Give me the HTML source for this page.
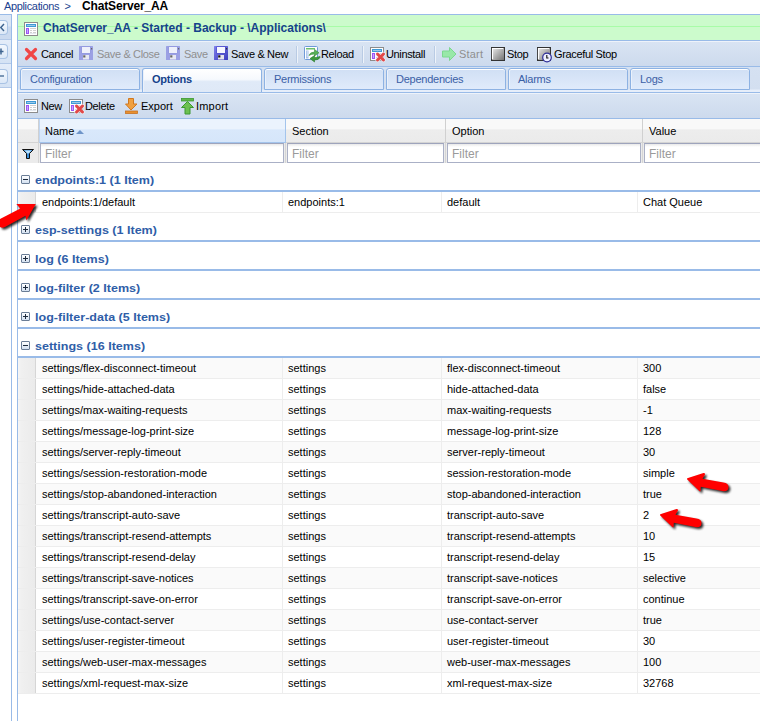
<!DOCTYPE html>
<html><head><meta charset="utf-8"><style>
*{box-sizing:border-box}
html,body{margin:0;padding:0}
body{width:760px;height:721px;overflow:hidden;position:relative;background:#fff;font-family:"Liberation Sans",sans-serif;font-size:11px;color:#000}
.a{position:absolute}
.t{position:absolute;white-space:nowrap;line-height:1}
svg{position:absolute;display:block;overflow:visible}
#crumb1{left:4px;top:1px;font-size:11px;color:#1c3f8f;letter-spacing:-0.35px}
#crumb2{left:82px;top:0px;font-size:12px;font-weight:bold;color:#000;letter-spacing:-0.15px}
#lstrip{left:0;top:14px;width:12px;height:707px;border-right:1px solid #99bbe8;border-top:1px solid #99bbe8;background:#fff}
#lstripTop{left:0;top:15px;width:11px;height:73px;background:linear-gradient(#dce7f5 0,#dae5f4 11px,#c9d9ef 12px,#cbdaef 24px,#e4edf9 25px,#d4e2f4 48px,#e4edf9 49px,#d4e2f4 72px)}
.lbtn{position:absolute;left:0;width:8px;height:15px;border:1px solid #a9c3e4;border-left:none;border-radius:0 4px 4px 0;background:linear-gradient(#f3f8fe,#dce8f7)}
.lsep{position:absolute;left:0;width:11px;height:1px;background:#b3c9e8}
#main{left:17px;top:14px;width:743px;height:707px;border-left:1px solid #99bbe8;border-top:1px solid #99bbe8}
#title{left:18px;top:15px;width:742px;height:26px;background:#ccfbcc;border-bottom:1px solid #99bbe8}
#titleLine{left:18px;top:26px;width:742px;height:1px;background:#a8fca8}
#titleTxt{left:43px;top:22px;font-size:12px;font-weight:bold;color:#15428b;letter-spacing:0}
#tb1{left:18px;top:41px;width:742px;height:26px;background:linear-gradient(#eef3fa 0,#eef3fa 1px,#d9e4f3 1px,#cddaed);border-bottom:1px solid #99bbe8}
.tbt{position:absolute;white-space:nowrap;line-height:1;font-size:11px;top:49px;color:#000;letter-spacing:-0.35px}
.dis{color:#8f8f8f}
.tsep{position:absolute;top:46px;width:1px;height:17px;background:#b9cbe4;box-shadow:1px 0 0 #eef3fa}
#tabs{left:18px;top:67px;width:742px;height:26px;background:linear-gradient(#d5e1f2 0,#d3dff0 22px,#e6eefa 23px);border-bottom:1px solid #99bbe8}
.tab{position:absolute;top:68px;width:120px;height:22px;border:1px solid #8db2e3;border-radius:3px 3px 0 0;background:linear-gradient(#d0dff4,#e0ebfb);box-shadow:inset 0 1px 0 #fff,inset 1px 0 0 #eaf1fb}
.tab.act{height:24px;border-bottom:none;background:linear-gradient(#fff 0,#f6f9fd 45%,#e0eaf8 55%,#dfe9f7)}
.tabtxt{position:absolute;top:74px;font-size:11px;color:#3a60a6;white-space:nowrap;line-height:1;letter-spacing:-0.25px}
.tabtxt.act{font-weight:bold;color:#15428b}
#tb2{left:18px;top:93px;width:742px;height:26px;background:linear-gradient(#eef3fa 0,#eef3fa 1px,#d9e4f3 1px,#cddaed);border-bottom:1px solid #99bbe8}
.tb2t{position:absolute;white-space:nowrap;line-height:1;font-size:11px;top:101px;color:#000;letter-spacing:-0.35px}
#hdr{left:18px;top:119px;width:742px;height:24px;background:linear-gradient(#f9f9f9 0,#f9f9f9 45%,#ededed 46%,#ebebeb);border-bottom:1px solid #d4d4d4}
#hdrSort{left:39px;top:119px;width:247px;height:24px;background:linear-gradient(#ebf3fd 0,#ebf3fd 45%,#d9e8fb 46%,#d6e6fa);border-left:1px solid #c0d6f2;border-right:1px solid #a3c4ec;border-bottom:1px solid #a3c4ec}
.hsep{position:absolute;top:119px;width:1px;height:23px;background:#d0d0d0}
.ht{position:absolute;white-space:nowrap;line-height:1;font-size:11px;top:126px;color:#000}
#filt{left:18px;top:143px;width:742px;height:20px;background:#ebebeb}
.fin{position:absolute;top:143px;height:20px;background:linear-gradient(#e9e9e9,#fff 3px,#fff);border:1px solid #aab0c6;border-top-color:#9ea4bc}
.ft{position:absolute;white-space:nowrap;line-height:1;font-size:12px;top:148px;color:#9a9a9a}
.fsep{position:absolute;top:143px;width:1px;height:20px;background:#d5d5d5}
.grp{position:absolute;left:18px;width:742px;height:29px;background:#fff;border-bottom:2px solid #99bbe8}
.gbox{position:absolute;left:21px;width:9px;height:9px;border:1px solid #6a7d96;border-radius:1px;background:linear-gradient(#fff,#d4e1f1)}
.gh{position:absolute;left:1px;top:3px;width:5px;height:1px;background:#1d2a3c}
.gv{position:absolute;left:3px;top:1px;width:1px;height:5px;background:#1d2a3c}
.gt{position:absolute;left:35px;white-space:nowrap;line-height:1;font-size:11px;font-weight:bold;color:#2f5ea8;transform:scaleX(1.14);transform-origin:0 0}
.row{position:absolute;left:18px;width:742px;height:21px;background:#fff;border-bottom:1px solid #ededed}
.row.alt{background:#fafafa}
.rn{position:absolute;left:18px;width:18px;height:20px;background:linear-gradient(90deg,#f6f6f6,#f0f0f0 3px,#ebebeb);border-right:1px solid #d6d6d6}
.csep{position:absolute;width:1px;height:20px;background:#ededed}
.ct{position:absolute;white-space:nowrap;line-height:1;font-size:11px;color:#000}

</style></head><body>
<div class="t" id="crumb1">Applications&nbsp; &gt;</div>
<div class="t" id="crumb2">ChatServer_AA</div>
<div class="a" id="lstrip"></div>
<div class="a" id="lstripTop"></div>
<div class="lbtn" style="top:20px"></div>
<div class="lsep" style="top:39px"></div>
<div class="lbtn" style="top:44px"></div>
<div class="lsep" style="top:63px"></div>
<div class="lbtn" style="top:69px"></div>
<div class="lsep" style="top:87px"></div>
<svg style="left:0;top:20px" width="8" height="15"><path d="M4 4 L0.8 7.5 L4 11" stroke="#3f6590" stroke-width="1.4" fill="none"/></svg>
<svg style="left:0;top:44px" width="8" height="15"><path d="M0 7.5 H3.5 M1 4.5 V10.5" stroke="#3f6590" stroke-width="1.5" fill="none"/></svg>
<svg style="left:0;top:69px" width="8" height="15"><path d="M0 7 H4" stroke="#3f6590" stroke-width="1.3" fill="none"/></svg>

<div class="a" id="main"></div>
<div class="a" id="title"></div>
<div class="a" id="titleLine"></div>
<svg style="left:24px;top:22px" width="14" height="14"><rect x="0.5" y="0.5" width="13" height="13" fill="#fff" stroke="#8c8c8c"/><rect x="2" y="2" width="10" height="3" fill="#3d9ad6"/><rect x="3" y="3" width="8" height="1" fill="#9cc8e8"/><rect x="2" y="6" width="3" height="6" fill="#9b55f5"/><rect x="3" y="7" width="1" height="4" fill="#c9a8fb"/><rect x="6" y="6" width="6" height="1" fill="#d0d0d0"/><rect x="6" y="8" width="2" height="1" fill="#d0d0d0"/><rect x="9" y="8" width="3" height="1" fill="#d0d0d0"/><rect x="6" y="10" width="2" height="1" fill="#d0d0d0"/><rect x="9" y="10" width="3" height="1" fill="#d0d0d0"/><rect x="6" y="11" width="6" height="1" fill="#e4e8f0"/></svg>
<div class="t" id="titleTxt">ChatServer_AA - Started - Backup - \Applications\</div>

<div class="a" id="tb1"></div>
<!-- Cancel -->
<svg style="left:25px;top:48px" width="12" height="12"><path d="M1.5 1.5 L10.5 10.5 M10.5 1.5 L1.5 10.5" stroke="#f04646" stroke-width="3.2" stroke-linecap="round"/></svg>
<div class="tbt" style="left:41px">Cancel</div>
<!-- Save & Close (disabled) -->
<svg style="left:79px;top:46px" width="14" height="14"><rect x="0" y="0" width="14" height="14" rx="0.5" fill="#9ba0e4"/><rect x="2.5" y="0.5" width="9" height="7" fill="#8e93dc"/><rect x="3" y="1" width="8" height="6" fill="#eef0fb"/><rect x="4" y="9" width="6" height="4.5" fill="#e6e8f2"/><rect x="4.2" y="9.3" width="2.2" height="2.2" fill="#666"/><rect x="12" y="2" width="1.2" height="1.5" fill="#666"/></svg>
<div class="tbt dis" style="left:97px">Save &amp; Close</div>
<svg style="left:166px;top:46px" width="14" height="14"><rect x="0" y="0" width="14" height="14" rx="0.5" fill="#9ba0e4"/><rect x="2.5" y="0.5" width="9" height="7" fill="#8e93dc"/><rect x="3" y="1" width="8" height="6" fill="#eef0fb"/><rect x="4" y="9" width="6" height="4.5" fill="#e6e8f2"/><rect x="4.2" y="9.3" width="2.2" height="2.2" fill="#666"/><rect x="12" y="2" width="1.2" height="1.5" fill="#666"/></svg>
<div class="tbt dis" style="left:184px">Save</div>
<svg style="left:214px;top:46px" width="14" height="14"><defs><linearGradient id="sv" x1="0" y1="0" x2="1" y2="1"><stop offset="0" stop-color="#8080ec"/><stop offset="1" stop-color="#3c3cbc"/></linearGradient></defs><rect x="0" y="0" width="14" height="14" rx="0.5" fill="url(#sv)"/><rect x="2.5" y="0.5" width="9" height="7" fill="#4646c8"/><rect x="3" y="1" width="8" height="6" fill="#f6f7ff"/><rect x="4" y="9" width="6" height="4.5" fill="#e4e4ec"/><rect x="4.2" y="9.3" width="2.2" height="2.2" fill="#111"/><rect x="12" y="2" width="1.2" height="1.5" fill="#333"/></svg>
<div class="tbt" style="left:231px">Save &amp; New</div>
<div class="tsep" style="left:296px"></div>
<!-- Reload -->
<svg style="left:304px;top:46px" width="16" height="16"><rect x="0.5" y="0.5" width="13" height="13" rx="1" fill="#fff" stroke="#6f9ad8"/><rect x="2" y="2" width="9" height="1.5" fill="#6cbf6c"/><rect x="2" y="4.5" width="2.5" height="8" fill="#a9c3ea"/><rect x="2.8" y="5.5" width="1" height="1" fill="#fff"/><rect x="2.8" y="7.5" width="1" height="1" fill="#fff"/><rect x="2.8" y="9.5" width="1" height="1" fill="#fff"/><path d="M5 9.5 Q6 6 10.5 6 V3.5 L15 6.8 L10.5 10 V8 Q7 8 5 9.5Z" fill="#58b058" stroke="#3d8f3d" stroke-width="0.6"/><path d="M16 11.5 Q15 14 10.5 14 V16 L6 12.6 L10.5 9.5 V11.5 Q13 11.5 16 10.5Z" fill="#3d9a3d" stroke="#2a7a2a" stroke-width="0.6"/></svg>
<div class="tbt" style="left:321px">Reload</div>
<div class="tsep" style="left:362px"></div>
<!-- Uninstall -->
<svg style="left:370px;top:47px" width="16" height="16"><rect x="0.5" y="0.5" width="13" height="13" fill="#fff" stroke="#8c8c8c"/><rect x="2" y="2" width="10" height="3" fill="#3d9ad6"/><rect x="3" y="3" width="8" height="1" fill="#9cc8e8"/><rect x="2" y="6" width="3" height="6" fill="#9b55f5"/><rect x="3" y="7" width="1" height="4" fill="#c9a8fb"/><rect x="6" y="6" width="6" height="1" fill="#d0d0d0"/><rect x="6" y="8" width="2" height="1" fill="#d0d0d0"/><rect x="9" y="8" width="3" height="1" fill="#d0d0d0"/><rect x="6" y="10" width="2" height="1" fill="#d0d0d0"/><rect x="9" y="10" width="3" height="1" fill="#d0d0d0"/><rect x="6" y="11" width="6" height="1" fill="#e4e8f0"/><path d="M7.5 7 L13.5 13 M13.5 7 L7.5 13" stroke="#f4f7fc" stroke-width="4.4" stroke-linecap="round" opacity="0.8"/><path d="M7.5 7 L13.5 13 M13.5 7 L7.5 13" stroke="#e24848" stroke-width="3" stroke-linecap="round"/></svg>
<div class="tbt" style="left:386px">Uninstall</div>
<div class="tsep" style="left:434px"></div>
<!-- Start -->
<svg style="left:442px;top:47px" width="15" height="14"><path d="M0.5 4 H7.5 V0.5 L14 7 L7.5 13.5 V10 H0.5Z" fill="#98e8a8" stroke="#7cd890" stroke-width="1"/></svg>
<div class="tbt dis" style="left:459px;letter-spacing:0.2px">Start</div>
<!-- Stop -->
<svg style="left:491px;top:47px" width="14" height="14"><defs><linearGradient id="gs" x1="0" y1="0" x2="1" y2="1"><stop offset="0" stop-color="#f0f0f0"/><stop offset="1" stop-color="#6e6e6e"/></linearGradient></defs><rect x="0.5" y="0.5" width="13" height="13" fill="url(#gs)" stroke="#333"/><path d="M1.5 12 V1.5 H12" stroke="#fff" stroke-width="1.2" fill="none"/></svg>
<div class="tbt" style="left:507px">Stop</div>
<!-- Graceful Stop -->
<svg style="left:537px;top:47px" width="16" height="16"><rect x="0.5" y="0.5" width="13" height="13" fill="url(#gs)" stroke="#333"/><path d="M1.5 12 V1.5 H12" stroke="#fff" stroke-width="1.2" fill="none"/><circle cx="10" cy="10.5" r="4.3" fill="#eef0ff" stroke="#2d2d9a" stroke-width="1.2"/><path d="M9.8 8 V11 H11.5" stroke="#111" stroke-width="1.1" fill="none"/></svg>
<div class="tbt" style="left:554px">Graceful Stop</div>

<div class="a" id="tabs"></div>
<div class="tab" style="left:20px"></div><div class="tabtxt" style="left:30px">Configuration</div>
<div class="tab act" style="left:142px"></div><div class="tabtxt act" style="left:152px">Options</div>
<div class="tab" style="left:264px"></div><div class="tabtxt" style="left:274px">Permissions</div>
<div class="tab" style="left:386px"></div><div class="tabtxt" style="left:396px">Dependencies</div>
<div class="tab" style="left:508px"></div><div class="tabtxt" style="left:518px">Alarms</div>
<div class="tab" style="left:630px"></div><div class="tabtxt" style="left:640px">Logs</div>

<div class="a" id="tb2"></div>
<svg style="left:24px;top:99px" width="14" height="14"><rect x="0.5" y="0.5" width="13" height="13" fill="#fff" stroke="#8c8c8c"/><rect x="2" y="2" width="10" height="3" fill="#3d9ad6"/><rect x="3" y="3" width="8" height="1" fill="#9cc8e8"/><rect x="2" y="6" width="3" height="6" fill="#9b55f5"/><rect x="3" y="7" width="1" height="4" fill="#c9a8fb"/><rect x="6" y="6" width="6" height="1" fill="#d0d0d0"/><rect x="6" y="8" width="2" height="1" fill="#d0d0d0"/><rect x="9" y="8" width="3" height="1" fill="#d0d0d0"/><rect x="6" y="10" width="2" height="1" fill="#d0d0d0"/><rect x="9" y="10" width="3" height="1" fill="#d0d0d0"/><rect x="6" y="11" width="6" height="1" fill="#e4e8f0"/></svg>
<div class="tb2t" style="left:41px">New</div>
<svg style="left:69px;top:99px" width="16" height="16"><rect x="0.5" y="0.5" width="13" height="13" fill="#fff" stroke="#8c8c8c"/><rect x="2" y="2" width="10" height="3" fill="#3d9ad6"/><rect x="3" y="3" width="8" height="1" fill="#9cc8e8"/><rect x="2" y="6" width="3" height="6" fill="#9b55f5"/><rect x="3" y="7" width="1" height="4" fill="#c9a8fb"/><rect x="6" y="6" width="6" height="1" fill="#d0d0d0"/><rect x="6" y="8" width="2" height="1" fill="#d0d0d0"/><rect x="9" y="8" width="3" height="1" fill="#d0d0d0"/><rect x="6" y="10" width="2" height="1" fill="#d0d0d0"/><rect x="9" y="10" width="3" height="1" fill="#d0d0d0"/><rect x="6" y="11" width="6" height="1" fill="#e4e8f0"/><path d="M7.5 7 L13.5 13 M13.5 7 L7.5 13" stroke="#f4f7fc" stroke-width="4.4" stroke-linecap="round" opacity="0.8"/><path d="M7.5 7 L13.5 13 M13.5 7 L7.5 13" stroke="#e24848" stroke-width="3" stroke-linecap="round"/></svg>
<div class="tb2t" style="left:85px">Delete</div>
<svg style="left:125px;top:98px" width="13" height="16"><path d="M3.5 0.5 H8.5 V6 H12 L6 12 L0.5 6 H3.5Z" fill="#f0a040" stroke="#d07820" stroke-width="1"/><rect x="0.5" y="13" width="12" height="2.5" fill="#e89030" stroke="#c87020" stroke-width="0.8"/></svg>
<div class="tb2t" style="left:141px;letter-spacing:0">Export</div>
<svg style="left:181px;top:98px" width="13" height="17"><rect x="0.5" y="0.5" width="12" height="2.5" fill="#60b848" stroke="#3c9830" stroke-width="0.8"/><path d="M6.5 3.5 L12.5 9.5 H9 V16 H4 V9.5 H0.5Z" fill="#6cc050" stroke="#3c9830" stroke-width="1"/></svg>
<div class="tb2t" style="left:196px;letter-spacing:0.2px">Import</div>

<div class="a" id="hdr"></div>
<div class="hsep" style="left:38px"></div>
<div class="a" id="hdrSort"></div>
<div class="hsep" style="left:445px"></div>
<div class="hsep" style="left:642px"></div>
<div class="ht" style="left:45px">Name</div>
<svg style="left:76px;top:130px" width="8" height="4"><path d="M0 4 L4 0 L8 4Z" fill="#6f95c9"/></svg>
<div class="ht" style="left:292px">Section</div>
<div class="ht" style="left:452px">Option</div>
<div class="ht" style="left:649px">Value</div>

<div class="a" id="filt"></div>
<div class="fsep" style="left:38px"></div>
<svg style="left:22px;top:149px" width="12" height="10"><path d="M0.5 0.5 H11.5 L7.5 4.5 V9.5 H4.5 V4.5Z" fill="#3d8fd8" stroke="#111" stroke-width="1"/><path d="M2.5 1.5 H9.5 L6.5 4.5 H5.5Z" fill="#bfe3fb"/></svg>
<div class="fin" style="left:40px;width:244px"></div>
<div class="fsep" style="left:285px"></div>
<div class="fin" style="left:287px;width:157px"></div>
<div class="fsep" style="left:445px"></div>
<div class="fin" style="left:447px;width:194px"></div>
<div class="fsep" style="left:642px"></div>
<div class="fin" style="left:644px;width:130px"></div>
<div class="ft" style="left:45px">Filter</div>
<div class="ft" style="left:292px">Filter</div>
<div class="ft" style="left:452px">Filter</div>
<div class="ft" style="left:649px">Filter</div>
<div class="grp" style="top:163px"></div><div class="gbox" style="top:175px"><div class="gh"></div></div><div class="gt" style="top:175px">endpoints:1 (1 Item)</div>
<div class="row" style="top:192px"></div><div class="rn" style="top:192px"></div><div class="csep" style="left:282px;top:192px"></div><div class="csep" style="left:441px;top:192px"></div><div class="csep" style="left:637px;top:192px"></div><div class="ct" style="left:42px;top:197px">endpoints:1/default</div><div class="ct" style="left:288px;top:197px">endpoints:1</div><div class="ct" style="left:447px;top:197px">default</div><div class="ct" style="left:643px;top:197px">Chat Queue</div>
<div class="grp" style="top:213px"></div><div class="gbox" style="top:225px"><div class="gh"></div><div class="gv"></div></div><div class="gt" style="top:225px">esp-settings (1 Item)</div>
<div class="grp" style="top:242px"></div><div class="gbox" style="top:254px"><div class="gh"></div><div class="gv"></div></div><div class="gt" style="top:254px">log (6 Items)</div>
<div class="grp" style="top:271px"></div><div class="gbox" style="top:283px"><div class="gh"></div><div class="gv"></div></div><div class="gt" style="top:283px">log-filter (2 Items)</div>
<div class="grp" style="top:300px"></div><div class="gbox" style="top:312px"><div class="gh"></div><div class="gv"></div></div><div class="gt" style="top:312px">log-filter-data (5 Items)</div>
<div class="grp" style="top:329px"></div><div class="gbox" style="top:341px"><div class="gh"></div></div><div class="gt" style="top:341px">settings (16 Items)</div>
<div class="row alt" style="top:358px"></div><div class="rn" style="top:358px"></div><div class="csep" style="left:282px;top:358px"></div><div class="csep" style="left:441px;top:358px"></div><div class="csep" style="left:637px;top:358px"></div><div class="ct" style="left:42px;top:363px">settings/flex-disconnect-timeout</div><div class="ct" style="left:288px;top:363px">settings</div><div class="ct" style="left:447px;top:363px">flex-disconnect-timeout</div><div class="ct" style="left:643px;top:363px">300</div>
<div class="row" style="top:379px"></div><div class="rn" style="top:379px"></div><div class="csep" style="left:282px;top:379px"></div><div class="csep" style="left:441px;top:379px"></div><div class="csep" style="left:637px;top:379px"></div><div class="ct" style="left:42px;top:384px">settings/hide-attached-data</div><div class="ct" style="left:288px;top:384px">settings</div><div class="ct" style="left:447px;top:384px">hide-attached-data</div><div class="ct" style="left:643px;top:384px">false</div>
<div class="row alt" style="top:400px"></div><div class="rn" style="top:400px"></div><div class="csep" style="left:282px;top:400px"></div><div class="csep" style="left:441px;top:400px"></div><div class="csep" style="left:637px;top:400px"></div><div class="ct" style="left:42px;top:405px">settings/max-waiting-requests</div><div class="ct" style="left:288px;top:405px">settings</div><div class="ct" style="left:447px;top:405px">max-waiting-requests</div><div class="ct" style="left:643px;top:405px">-1</div>
<div class="row" style="top:421px"></div><div class="rn" style="top:421px"></div><div class="csep" style="left:282px;top:421px"></div><div class="csep" style="left:441px;top:421px"></div><div class="csep" style="left:637px;top:421px"></div><div class="ct" style="left:42px;top:426px">settings/message-log-print-size</div><div class="ct" style="left:288px;top:426px">settings</div><div class="ct" style="left:447px;top:426px">message-log-print-size</div><div class="ct" style="left:643px;top:426px">128</div>
<div class="row alt" style="top:442px"></div><div class="rn" style="top:442px"></div><div class="csep" style="left:282px;top:442px"></div><div class="csep" style="left:441px;top:442px"></div><div class="csep" style="left:637px;top:442px"></div><div class="ct" style="left:42px;top:447px">settings/server-reply-timeout</div><div class="ct" style="left:288px;top:447px">settings</div><div class="ct" style="left:447px;top:447px">server-reply-timeout</div><div class="ct" style="left:643px;top:447px">30</div>
<div class="row" style="top:463px"></div><div class="rn" style="top:463px"></div><div class="csep" style="left:282px;top:463px"></div><div class="csep" style="left:441px;top:463px"></div><div class="csep" style="left:637px;top:463px"></div><div class="ct" style="left:42px;top:468px">settings/session-restoration-mode</div><div class="ct" style="left:288px;top:468px">settings</div><div class="ct" style="left:447px;top:468px">session-restoration-mode</div><div class="ct" style="left:643px;top:468px">simple</div>
<div class="row alt" style="top:484px"></div><div class="rn" style="top:484px"></div><div class="csep" style="left:282px;top:484px"></div><div class="csep" style="left:441px;top:484px"></div><div class="csep" style="left:637px;top:484px"></div><div class="ct" style="left:42px;top:489px">settings/stop-abandoned-interaction</div><div class="ct" style="left:288px;top:489px">settings</div><div class="ct" style="left:447px;top:489px">stop-abandoned-interaction</div><div class="ct" style="left:643px;top:489px">true</div>
<div class="row" style="top:505px"></div><div class="rn" style="top:505px"></div><div class="csep" style="left:282px;top:505px"></div><div class="csep" style="left:441px;top:505px"></div><div class="csep" style="left:637px;top:505px"></div><div class="ct" style="left:42px;top:510px">settings/transcript-auto-save</div><div class="ct" style="left:288px;top:510px">settings</div><div class="ct" style="left:447px;top:510px">transcript-auto-save</div><div class="ct" style="left:643px;top:510px">2</div>
<div class="row alt" style="top:526px"></div><div class="rn" style="top:526px"></div><div class="csep" style="left:282px;top:526px"></div><div class="csep" style="left:441px;top:526px"></div><div class="csep" style="left:637px;top:526px"></div><div class="ct" style="left:42px;top:531px">settings/transcript-resend-attempts</div><div class="ct" style="left:288px;top:531px">settings</div><div class="ct" style="left:447px;top:531px">transcript-resend-attempts</div><div class="ct" style="left:643px;top:531px">10</div>
<div class="row" style="top:547px"></div><div class="rn" style="top:547px"></div><div class="csep" style="left:282px;top:547px"></div><div class="csep" style="left:441px;top:547px"></div><div class="csep" style="left:637px;top:547px"></div><div class="ct" style="left:42px;top:552px">settings/transcript-resend-delay</div><div class="ct" style="left:288px;top:552px">settings</div><div class="ct" style="left:447px;top:552px">transcript-resend-delay</div><div class="ct" style="left:643px;top:552px">15</div>
<div class="row alt" style="top:568px"></div><div class="rn" style="top:568px"></div><div class="csep" style="left:282px;top:568px"></div><div class="csep" style="left:441px;top:568px"></div><div class="csep" style="left:637px;top:568px"></div><div class="ct" style="left:42px;top:573px">settings/transcript-save-notices</div><div class="ct" style="left:288px;top:573px">settings</div><div class="ct" style="left:447px;top:573px">transcript-save-notices</div><div class="ct" style="left:643px;top:573px">selective</div>
<div class="row" style="top:589px"></div><div class="rn" style="top:589px"></div><div class="csep" style="left:282px;top:589px"></div><div class="csep" style="left:441px;top:589px"></div><div class="csep" style="left:637px;top:589px"></div><div class="ct" style="left:42px;top:594px">settings/transcript-save-on-error</div><div class="ct" style="left:288px;top:594px">settings</div><div class="ct" style="left:447px;top:594px">transcript-save-on-error</div><div class="ct" style="left:643px;top:594px">continue</div>
<div class="row alt" style="top:610px"></div><div class="rn" style="top:610px"></div><div class="csep" style="left:282px;top:610px"></div><div class="csep" style="left:441px;top:610px"></div><div class="csep" style="left:637px;top:610px"></div><div class="ct" style="left:42px;top:615px">settings/use-contact-server</div><div class="ct" style="left:288px;top:615px">settings</div><div class="ct" style="left:447px;top:615px">use-contact-server</div><div class="ct" style="left:643px;top:615px">true</div>
<div class="row" style="top:631px"></div><div class="rn" style="top:631px"></div><div class="csep" style="left:282px;top:631px"></div><div class="csep" style="left:441px;top:631px"></div><div class="csep" style="left:637px;top:631px"></div><div class="ct" style="left:42px;top:636px">settings/user-register-timeout</div><div class="ct" style="left:288px;top:636px">settings</div><div class="ct" style="left:447px;top:636px">user-register-timeout</div><div class="ct" style="left:643px;top:636px">30</div>
<div class="row alt" style="top:652px"></div><div class="rn" style="top:652px"></div><div class="csep" style="left:282px;top:652px"></div><div class="csep" style="left:441px;top:652px"></div><div class="csep" style="left:637px;top:652px"></div><div class="ct" style="left:42px;top:657px">settings/web-user-max-messages</div><div class="ct" style="left:288px;top:657px">settings</div><div class="ct" style="left:447px;top:657px">web-user-max-messages</div><div class="ct" style="left:643px;top:657px">100</div>
<div class="row" style="top:673px"></div><div class="rn" style="top:673px"></div><div class="csep" style="left:282px;top:673px"></div><div class="csep" style="left:441px;top:673px"></div><div class="csep" style="left:637px;top:673px"></div><div class="ct" style="left:42px;top:678px">settings/xml-request-max-size</div><div class="ct" style="left:288px;top:678px">settings</div><div class="ct" style="left:447px;top:678px">xml-request-max-size</div><div class="ct" style="left:643px;top:678px">32768</div>
<svg style="left:0;top:0" width="760" height="721">
<defs>
<filter id="sh" x="-50%" y="-50%" width="200%" height="200%"><feGaussianBlur stdDeviation="0.9"/></filter>
<path id="ar" d="M687 479.3 Q686.5 478.5 688 478 L703.5 473 Q705.5 472.8 705 474.5 L702.5 478.8 L723.5 482.6 Q728.5 483.5 728.5 487 Q728.5 491.5 723.5 491.3 L700.8 486.7 L700.6 490.5 Q700.5 492 699.3 491 Z"/>
<path id="al" d="M35.8 204 L16.3 204 L20.3 208.4 L0 219 L0 227 Q2 228.5 5 227 L25.5 215.7 L26.4 220.5 Z"/>
</defs>
<g transform="translate(1.8,1.8)" filter="url(#sh)" fill="#000" opacity="0.85">
<use href="#ar"/><use href="#ar" transform="translate(-27,36)"/><use href="#al"/>
</g>
<g fill="#ff0000">
<use href="#ar"/><use href="#ar" transform="translate(-27,36)"/><use href="#al"/>
</g>
</svg>
</body></html>
